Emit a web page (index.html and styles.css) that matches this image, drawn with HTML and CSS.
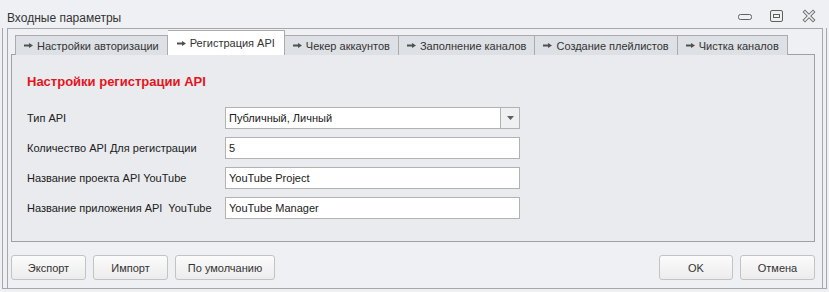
FILE: index.html
```html
<!DOCTYPE html>
<html lang="ru">
<head>
    <meta charset="UTF-8">
    <title>Входные параметры</title>
    <link rel="stylesheet" href="styles.css">
</head>
<body>
    <div class="window">
        <div class="titlebar">
            <span class="title">Входные параметры</span>
            <div class="controls">
                <svg class="ctl" width="16" height="16" viewBox="0 0 16 16"><rect x="1.5" y="6.5" width="13" height="5" rx="2" fill="none" stroke="#606060"/></svg>
                <svg class="ctl" width="16" height="16" viewBox="0 0 16 16"><rect x="1.5" y="2.5" width="12" height="11" rx="1.5" fill="none" stroke="#606060"/><rect x="4.5" y="6.5" width="6" height="3" fill="none" stroke="#606060"/></svg>
                <svg class="ctl" width="16" height="16" viewBox="0 0 16 16"><path d="M4 4L12 12M12 4L4 12" stroke="#707070" stroke-width="3.5" stroke-linecap="square"/><path d="M4 4L12 12M12 4L4 12" stroke="#eef0f3" stroke-width="1.6" stroke-linecap="square"/></svg>
            </div>
        </div>
        <div class="frame">
            <div class="group">
                <div class="tabs">
                    <div class="tab"><svg class="arrow" width="9" height="5" viewBox="0 0 9 5"><path d="M0 1.5h5V0l4 2.5L5 5V3.5H0z" fill="#505050"/></svg>Настройки авторизации</div>
                    <div class="tab active"><svg class="arrow" width="9" height="5" viewBox="0 0 9 5"><path d="M0 1.5h5V0l4 2.5L5 5V3.5H0z" fill="#505050"/></svg>Регистрация API</div>
                    <div class="tab"><svg class="arrow" width="9" height="5" viewBox="0 0 9 5"><path d="M0 1.5h5V0l4 2.5L5 5V3.5H0z" fill="#505050"/></svg>Чекер аккаунтов</div>
                    <div class="tab"><svg class="arrow" width="9" height="5" viewBox="0 0 9 5"><path d="M0 1.5h5V0l4 2.5L5 5V3.5H0z" fill="#505050"/></svg>Заполнение каналов</div>
                    <div class="tab"><svg class="arrow" width="9" height="5" viewBox="0 0 9 5"><path d="M0 1.5h5V0l4 2.5L5 5V3.5H0z" fill="#505050"/></svg>Создание плейлистов</div>
                    <div class="tab"><svg class="arrow" width="9" height="5" viewBox="0 0 9 5"><path d="M0 1.5h5V0l4 2.5L5 5V3.5H0z" fill="#505050"/></svg>Чистка каналов</div>
                </div>
                <div class="page">
                    <div class="heading">Настройки регистрации API</div>
                    <div class="row">
                        <label>Тип API</label>
                        <div class="field combo">
                            <span class="value">Публичный, Личный</span>
                            <span class="drop"><svg width="7" height="4" viewBox="0 0 7 4"><path d="M0 0h7L3.5 4z" fill="#606060"/></svg></span>
                        </div>
                    </div>
                    <div class="row">
                        <label>Количество API Для регистрации</label>
                        <div class="field"><span class="value">5</span></div>
                    </div>
                    <div class="row">
                        <label>Название проекта API YouTube</label>
                        <div class="field"><span class="value">YouTube Project</span></div>
                    </div>
                    <div class="row">
                        <label>Название приложения API&nbsp; YouTube</label>
                        <div class="field"><span class="value">YouTube Manager</span></div>
                    </div>
                </div>
                <div class="buttons">
                    <button class="btn">Экспорт</button>
                    <button class="btn">Импорт</button>
                    <button class="btn wide">По умолчанию</button>
                    <span class="spacer"></span>
                    <button class="btn ok">OK</button>
                    <button class="btn">Отмена</button>
                </div>
            </div>
        </div>
    </div>
</body>
</html>
```

FILE: styles.css
```css
body {
    margin: 0;
    background: #eef0f3;
    font-family: "Liberation Sans", Arial, sans-serif;
    font-size: 11px;
    color: #202020;
}
.window {
    width: 829px;
    height: 292px;
    box-sizing: border-box;
}
.titlebar {
    height: 28px;
    display: flex;
    align-items: center;
    padding-left: 7px;
    padding-right: 12px;
}
.title {
    flex: 1;
    font-size: 12px;
    color: #333;
    padding-top: 7px;
}
.controls {
    display: flex;
    gap: 16px;
    padding-top: 4px;
}
.frame {
    margin: 0 2px 0 2px;
    height: 261px;
    border: 1px solid #a8a8a8;
    border-top: none;
    padding: 0 3px 0 4px;
    box-sizing: border-box;
}
.group {
    height: 260px;
    border: 1px solid #a8a8a8;
    border-bottom: none;
    box-sizing: border-box;
    padding: 2px 7px 0 3px;
}
.tabs {
    display: flex;
    align-items: flex-end;
    padding-left: 4px;
    height: 24px;
    position: relative;
    z-index: 1;
    margin-bottom: -1px;
}
.tab {
    height: 20px;
    display: flex;
    align-items: center;
    padding: 0 8px;
    border: 1px solid #ababab;
    border-bottom: none;
    border-left: none;
    background: #dde0e4;
    color: #333;
    box-sizing: border-box;
    white-space: nowrap;
}
.tab:first-child {
    border-left: 1px solid #ababab;
}
.tab.active {
    height: 25px;
    background: #ffffff;
    padding: 0 9px;
}
.arrow {
    margin-right: 4px;
}
.page {
    height: 188px;
    border: 1px solid #a0a0a0;
    background: #e9ebee;
    box-sizing: border-box;
    padding: 19px 0 0 15px;
}
.heading {
    color: #e4141c;
    font-weight: bold;
    font-size: 13px;
    height: 16px;
    margin-bottom: 17px;
}
.row {
    display: flex;
    align-items: center;
    height: 22px;
    margin-bottom: 8px;
}
.row label {
    width: 198px;
    flex-shrink: 0;
}
.field {
    width: 295px;
    height: 22px;
    box-sizing: border-box;
    border: 1px solid #b2b2b2;
    background: #ffffff;
    display: flex;
    align-items: center;
}
.value {
    flex: 1;
    padding-left: 3px;
}
.drop {
    width: 18px;
    height: 20px;
    border-left: 1px solid #b2b2b2;
    background: #eef0f2;
    display: flex;
    align-items: center;
    justify-content: center;
}
.buttons {
    display: flex;
    gap: 7px;
    padding-top: 13px;
}
.spacer {
    flex: 1;
}
.btn {
    width: 75px;
    height: 25px;
    border: 1px solid #c3c3c3;
    border-radius: 3px;
    background: linear-gradient(#fbfbfb, #ececec);
    font-family: "Liberation Sans", Arial, sans-serif;
    font-size: 11px;
    color: #333;
    padding: 0;
}
.btn.wide {
    width: 100px;
}
.btn.ok {
    width: 74px;
}
```
